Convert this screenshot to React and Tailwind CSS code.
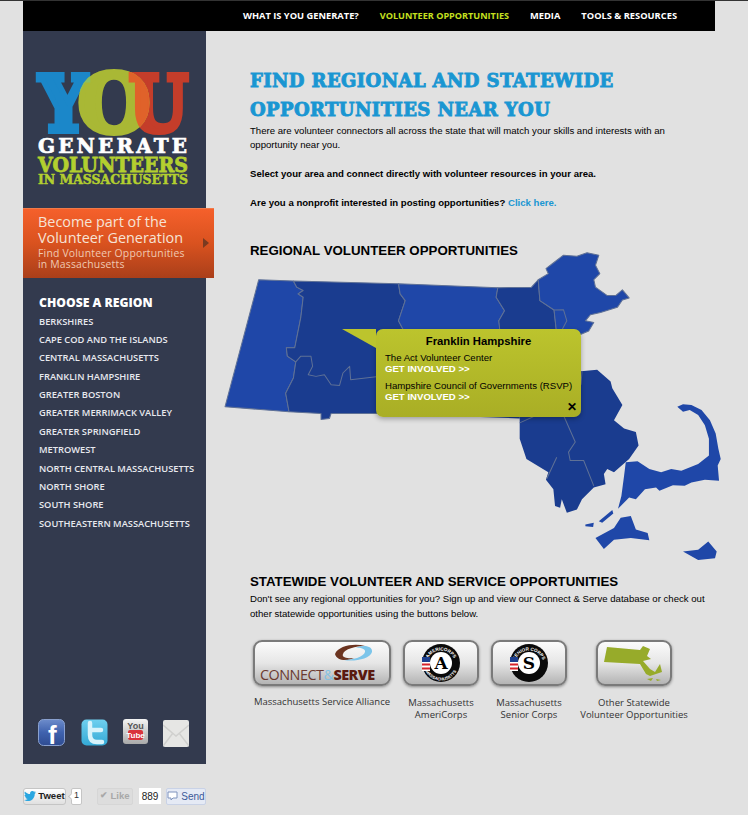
import React from "react";

const regions = [
  "Berkshires",
  "Cape Cod and the Islands",
  "Central Massachusetts",
  "Franklin Hampshire",
  "Greater Boston",
  "Greater Merrimack Valley",
  "Greater Springfield",
  "MetroWest",
  "North Central Massachusetts",
  "North Shore",
  "South Shore",
  "Southeastern Massachusetts",
];

const slab = { fontFamily: "'DejaVu Serif', serif", fontWeight: 700 };

const Logo = () => (
  <svg width="156" height="118" viewBox="0 0 156 118" className="block overflow-visible">
    <defs>
      <mask id="oMask" maskUnits="userSpaceOnUse" x="-5" y="-5" width="170" height="90">
        <text x="44" y="64" fontSize="80" textLength="72" lengthAdjust="spacingAndGlyphs" fill="#fff" stroke="#fff" strokeWidth="6" style={slab}>O</text>
      </mask>
    </defs>
    <text x="5" y="63" fontSize="77" textLength="48" lengthAdjust="spacingAndGlyphs" fill="#1b87c9" stroke="#1b87c9" strokeWidth="6" style={slab}>Y</text>
    <text x="95" y="63" fontSize="77" textLength="59" lengthAdjust="spacingAndGlyphs" fill="#c43d2a" stroke="#c43d2a" strokeWidth="6" style={slab}>U</text>
    <text x="44" y="64" fontSize="80" textLength="72" lengthAdjust="spacingAndGlyphs" fill="#a9b835" stroke="#a9b835" strokeWidth="6" style={slab}>O</text>
    <g mask="url(#oMask)">
      <text x="5" y="63" fontSize="77" textLength="48" lengthAdjust="spacingAndGlyphs" fill="#8cc060" stroke="#8cc060" strokeWidth="6" style={slab}>Y</text>
      <text x="95" y="63" fontSize="77" textLength="59" lengthAdjust="spacingAndGlyphs" fill="#e0622a" stroke="#e0622a" strokeWidth="6" style={slab}>U</text>
    </g>
    <text x="4" y="85" fontSize="20" textLength="149" lengthAdjust="spacing" fill="#fff" stroke="#fff" strokeWidth=".7" style={slab}>GENERATE</text>
    <text x="4" y="104" fontSize="20" textLength="150" lengthAdjust="spacingAndGlyphs" fill="#b3cf2f" stroke="#b3cf2f" strokeWidth=".8" style={slab}>VOLUNTEERS</text>
    <text x="4" y="116" fontSize="13" textLength="150" lengthAdjust="spacingAndGlyphs" fill="#b3cf2f" stroke="#b3cf2f" strokeWidth=".5" style={slab}>IN MASSACHUSETTS</text>
  </svg>
);

const MapShapes = () => (
  <svg width="528" height="330" viewBox="0 0 1568 980" className="block">
    <g stroke="#5f7196" strokeWidth="3" strokeLinejoin="round">
      <path fill="#1f47a8" d="M115,118 L218,122 L228,140 L247,150 L232,160 L247,170 L240,230 L222,320 L197,320 L200,345 L225,362 L218,410 L195,455 L205,510 L15,495 Z" />
      <path fill="#1a3c8f" d="M218,122 L530,130 L535,160 L550,180 L530,240 L545,268 L500,400 L470,515 L330,515 L325,530 L300,533 L300,515 L205,510 L195,455 L218,410 L225,362 L200,345 L197,320 L222,320 L240,230 L247,170 L232,160 L247,150 L228,140 Z" />
      <path fill="#1f47a8" d="M530,130 L825,142 L820,170 L845,210 L828,240 L832,268 L832,400 L500,400 L545,268 L530,240 L550,180 L535,160 Z" />
      <path fill="#1a3c8f" d="M470,515 L890,530 L900,400 L500,400 Z" stroke="none" />
      <path fill="#1a3c8f" d="M825,142 L925,140 L945,118 L950,180 L992,208 L1000,280 L832,280 L828,240 L845,210 L820,170 Z" />
      <path fill="#1f47a8" d="M945,118 L975,100 L968,85 L985,72 L1020,45 L1060,48 L1090,38 L1125,45 L1115,75 L1128,100 L1110,118 L1115,140 L1150,165 L1175,165 L1195,148 L1215,172 L1195,178 L1180,200 L1130,215 L1100,222 L1085,240 L1110,245 L1095,270 L1072,280 L1000,280 L992,208 L950,180 Z" />
      <path fill="none" d="M992,208 L1020,207 L1030,240 L1015,268" />
      <path fill="none" d="M225,362 L240,345 L270,345 L275,375 L262,400 L285,405 L310,400 L330,430 L355,432 L365,395 L385,375 L388,415 L470,405" />
    </g>
    <path fill="#1a3c8f" d="M900,400 L1072,390 L1120,385 L1160,420 L1165,440 L1195,490 L1170,535 L1200,560 L1235,570 L1243,610 L1215,650 L1170,690 L1150,680 L1140,695 L1145,725 L1110,735 L1075,770 L1060,800 L1030,810 L1015,770 L1010,795 L995,790 L990,740 L968,712 L975,690 L910,650 L890,590 L890,530 Z" />
    <path fill="none" stroke="#5f7196" strokeWidth="3" d="M1022,525 L1055,600 L1035,630 L1040,655 L1080,655 L1110,730 M1000,645 L970,710 M890,543 L930,525 M1075,390 L1072,430" />
    <g fill="#1f47a8">
      <path d="M1358,495 L1375,488 L1400,490 L1430,505 L1455,535 L1472,575 L1480,620 L1487,650 L1478,670 L1482,715 L1440,712 L1400,720 L1380,730 L1345,728 L1305,745 L1295,735 L1262,740 L1235,770 L1215,765 L1182,798 L1192,760 L1200,700 L1205,660 L1240,657 L1275,680 L1310,690 L1340,680 L1370,685 L1420,665 L1452,640 L1452,590 L1440,550 L1420,520 L1395,505 L1375,510 Z" />
      <path d="M1115,885 L1170,855 L1190,825 L1220,820 L1235,860 L1270,870 L1275,892 L1220,885 L1170,890 L1140,918 Z" />
      <path d="M1125,835 L1165,802 L1168,812 L1135,840 Z" />
      <path d="M1085,845 L1110,840 L1108,852 L1085,850 Z" />
      <path d="M1375,925 L1420,920 L1450,895 L1475,925 L1470,945 L1420,950 Z" />
    </g>
  </svg>
);

const Tooltip = () => (
  <div className="absolute left-[156px] top-[89px] w-[205px] h-[88px] rounded-[7px] bg-gradient-to-b from-[#bcc42d] to-[#a9ae25] shadow-[0_2px_5px_rgba(0,0,0,0.3)] px-[9px] pt-[5px] text-[9.6px] leading-[11px] text-black">
    <svg width="34" height="19" viewBox="0 0 34 19" className="absolute left-[-34px] top-0">
      <path d="M0,0 L34,0 L34,19 Z" fill="#bcc42d" />
    </svg>
    <div className="text-center text-[11.3px] font-bold leading-[14px] mb-[4px]">Franklin Hampshire</div>
    <div>The Act Volunteer Center</div>
    <div className="font-bold text-white mb-[6px]">GET INVOLVED &gt;&gt;</div>
    <div className="whitespace-nowrap">Hampshire Council of Governments (RSVP)</div>
    <div className="font-bold text-white">GET INVOLVED &gt;&gt;</div>
    <div className="absolute right-[4px] bottom-[3px] text-[12px] font-bold leading-[14px]">✕</div>
  </div>
);

const GlossButton = ({ width, children }) => (
  <div
    className="h-[46px] rounded-[9px] border-2 border-[#7a7a7a] bg-gradient-to-b from-[#fbfbfb] via-[#e6e6e6] to-[#b4b4b4] shadow-[0_1px_3px_rgba(0,0,0,0.4)] flex items-center justify-center overflow-hidden"
    style={{ width }}
  >
    {children}
  </div>
);

const FlagBadge = ({ letter, id, top, bottom }) => (
  <svg width="40" height="40" viewBox="0 0 40 40">
    <defs>
      <path id={id + "t"} d="M5.500,22 A14.500,14.500 0 0 1 34.500,22" />
      <path id={id + "b"} d="M2.500,20 A17.500,17.500 0 0 0 37.500,20" />
    </defs>
    <circle cx="20" cy="20" r="19" fill="#0a0a0a" />
    <circle cx="20" cy="20" r="11" fill="#fff" />
    <text x="20" y="26" textAnchor="middle" fontSize="17" fontWeight="700" fill="#000" fontFamily="'DejaVu Serif', serif">{letter}</text>
    <text fontSize="4.600" fontWeight="700" fill="#fff" fontFamily="'Liberation Sans', sans-serif">
      <textPath href={"#" + id + "t"} startOffset="50%" textAnchor="middle">{top}</textPath>
    </text>
    {bottom && (
      <text fontSize="4.200" fontWeight="700" fill="#fff" fontFamily="'Liberation Sans', sans-serif">
        <textPath href={"#" + id + "b"} startOffset="50%" textAnchor="middle">{bottom}</textPath>
      </text>
    )}
    <rect x="1" y="14" width="8" height="5" fill="#1d3f8f" />
    <rect x="1" y="19" width="8" height="9" fill="#fff" />
    <rect x="1" y="20.500" width="8" height="2" fill="#d8232a" />
    <rect x="1" y="24.500" width="8" height="2" fill="#d8232a" />
  </svg>
);

const ConnectLogo = () => (
  <div className="w-full h-full relative">
    <svg width="40" height="20" viewBox="0 0 40 20" className="absolute left-[79px] top-[1px]">
      <path d="M1,11 C4,3 20,0 31,3 C22,3 10,6 9,11 C7,15 16,16 20,15 C12,19 2,17 1,11 Z" fill="#6b3420" />
      <path d="M38,9 C36,16 20,19 10,17 C18,17 30,14 31,9 C32,6 26,4 21,5 C30,1 39,3 38,9 Z" fill="#7cc5ea" />
    </svg>
    <div className="absolute left-[5px] bottom-[1px] text-[14.4px] leading-[16px] whitespace-nowrap font-['Open_Sans',sans-serif] tracking-[-0.5px] text-[#6b3a30]">
      CONNECT<span className="text-[#85c2e2]">&amp;</span><span className="font-extrabold text-[#5a1a10]">SERVE</span>
    </div>
  </div>
);

const Social = () => (
  <div className="flex items-start pl-[15px] mt-auto mb-[17px]">
    <svg width="27" height="27" viewBox="0 0 27 27" className="mr-[16px]">
      <defs>
        <linearGradient id="fb" x1="0" y1="0" x2="0" y2="1">
          <stop offset="0" stopColor="#6d8ccb" />
          <stop offset=".5" stopColor="#3f62ae" />
          <stop offset="1" stopColor="#2f4c92" />
        </linearGradient>
      </defs>
      <rect x=".5" y=".5" width="26" height="26" rx="5" fill="url(#fb)" stroke="#89a0cf" />
      <text x="10" y="25" fontSize="26" fontWeight="700" fill="#fff" fontFamily="'Liberation Sans', sans-serif">f</text>
    </svg>
    <svg width="27" height="27" viewBox="0 0 27 27" className="mr-[15px]">
      <defs>
        <linearGradient id="tw" x1="0" y1="0" x2="0" y2="1">
          <stop offset="0" stopColor="#6fd0ef" />
          <stop offset="1" stopColor="#34a9d6" />
        </linearGradient>
      </defs>
      <rect x=".5" y=".5" width="26" height="26" rx="5" fill="url(#tw)" />
      <path d="M9,4 L9,16 C9,21 12,23 16,23 L21,23 M9,11 L20,11" fill="none" stroke="#d8f3fb" strokeWidth="4.5" strokeLinecap="round" />
    </svg>
    <svg width="25" height="26" viewBox="0 0 25 26" className="mr-[15px]">
      <defs>
        <linearGradient id="yt" x1="0" y1="0" x2="0" y2="1">
          <stop offset="0" stopColor="#f4f4f4" />
          <stop offset="1" stopColor="#a9a9a9" />
        </linearGradient>
      </defs>
      <rect width="25" height="25" rx="3" fill="url(#yt)" />
      <text x="12.5" y="10" textAnchor="middle" fontSize="9" fontWeight="700" fill="#555" fontFamily="'Liberation Sans', sans-serif">You</text>
      <rect x="5" y="11" width="15" height="10" rx="2" fill="#d9333c" />
      <text x="12.5" y="19" textAnchor="middle" fontSize="8" fontWeight="700" fill="#fff" fontFamily="'Liberation Sans', sans-serif">Tube</text>
    </svg>
    <svg width="26" height="27" viewBox="0 0 26 27" className="mt-[1px]">
      <rect width="26" height="27" rx="2" fill="#e6e6e4" />
      <path d="M0,5 L13,16 L26,5 M0,26 L10,13 M26,26 L16,13" fill="none" stroke="#d0d0ce" strokeWidth="1.5" />
    </svg>
  </div>
);

const Caret = () => (
  <span className="absolute left-[-3px] top-[5px] w-[5px] h-[5px] rotate-45 bg-white border-l border-b border-[#c5c5c5]" />
);

const ShareBar = () => (
  <div className="flex items-center h-[16px] mt-[24px] text-[10px] font-['Liberation_Sans',sans-serif]">
    <div className="w-[43px] h-[17px] flex items-center justify-center gap-[2px] rounded-[3px] border border-[#c5c5c5] bg-gradient-to-b from-[#fff] to-[#e0e0e0] font-bold text-[#222] text-[9.6px]">
      <svg width="12" height="10" viewBox="0 0 24 20">
        <path d="M24,2.4 C23,2.8 22,3.1 21,3.2 C22,2.5 23,1.4 23.400,0.2 C22.400,0.800 21.300,1.200 20.200,1.400 C18,-0.900 14.300,-0.200 12.900,2.100 C12,3.500 11.900,5 12.200,6.200 C8,6 4.300,4 1.700,.9 C.3,3.300 1,6.300 3.300,7.900 C2.500,7.900 1.700,7.600 1,7.300 C1,9.800 2.700,11.800 5,12.300 C4.300,12.500 3.500,12.500 2.800,12.400 C3.400,14.400 5.300,15.900 7.500,15.900 C5.400,17.500 2.700,18.300 0,18 C2.200,19.400 4.900,20.200 7.600,20.200 C16.600,20.200 21.700,12.600 21.400,5.800 C22.400,4.900 23.300,3.800 24,2.400 Z" fill="#2aa6e0" />
      </svg>
      Tweet
    </div>
    <div className="relative ml-[5px] w-[11px] h-[17px] flex items-center justify-center rounded-[2px] border border-[#c5c5c5] bg-white text-[#333] text-[9px]">
      <Caret />
      <span className="relative">1</span>
    </div>
    <div className="ml-[15px] w-[36px] h-[17px] flex items-center justify-center gap-[2px] rounded-[2px] border border-[#d6d6d6] bg-[#dddddd] text-[#a8a8a8] font-bold text-[9.6px]">
      <span className="text-[9px]">✔</span>Like
    </div>
    <div className="relative ml-[6px] w-[22px] h-[16px] flex items-center justify-center bg-white text-[#222]">889</div>
    <div className="ml-[5px] w-[40px] h-[17px] flex items-center justify-center gap-[3px] rounded-[2px] border border-[#c9d2e6] bg-[#e5eaf5] text-[#3b5998]">
      <svg width="11" height="10" viewBox="0 0 11 10">
        <path d="M1,1 H10 V7 H6 L4,9 V7 H1 Z" fill="#fff" stroke="#7f93bd" />
      </svg>
      Send
    </div>
  </div>
);

export default function App() {
  return (
    <div className="w-[748px] h-[815px] overflow-hidden bg-[#e1e1e1] border-t border-[#333] font-['Liberation_Sans',sans-serif]">
      <div className="ml-[23px] w-[692px]">
        <nav className="h-[30px] bg-black flex items-center justify-end pr-[38px] gap-[21px] font-['Open_Sans',sans-serif] font-bold text-[9.3px] text-white whitespace-nowrap">
          <span>WHAT IS YOU GENERATE?</span>
          <span className="text-[#c6e01f] text-[9.1px]">VOLUNTEER OPPORTUNITIES</span>
          <span>MEDIA</span>
          <span>TOOLS &amp; RESOURCES</span>
        </nav>

        <div className="flex">
          <aside className="w-[183px] h-[733px] shrink-0 bg-[#333a4e] flex flex-col">
            <div className="pl-[11px] pt-[37px]">
              <Logo />
            </div>
            <div className="mt-[22px] w-[191px] h-[70px] bg-gradient-to-b from-[#f5602b] via-[#d9521f] to-[#aa3f1a] border-t border-[#f27a48] pl-[15px] pt-[5px] relative font-['Open_Sans',sans-serif] text-[#f6e3d6] whitespace-nowrap">
              <div className="text-[14.4px] leading-[15.5px]">Become part of the</div>
              <div className="text-[14.4px] leading-[15.5px]">Volunteer Generation</div>
              <div className="text-[10.4px] leading-[11px] mt-[3px] tracking-[0.2px] text-[#f0c9b2]">Find Volunteer Opportunities</div>
              <div className="text-[10.4px] leading-[11px] tracking-[0.2px] text-[#f0c9b2]">in Massachusetts</div>
              <div className="absolute left-[180px] top-[29px] w-0 h-0 border-y-[5px] border-y-transparent border-l-[6px] border-l-[#7a3a20]" />
            </div>
            <div className="pl-[16px] mt-[18px] font-['Open_Sans',sans-serif]">
              <div className="text-[12.2px] leading-[14px] font-extrabold text-white mb-[2.500px]">CHOOSE A REGION</div>
              {regions.map((r) => (
                <div key={r} className="h-[18.4px] leading-[18.4px] text-[9.3px] font-semibold uppercase text-[#e8e9ee] whitespace-nowrap">
                  {r}
                </div>
              ))}
            </div>
            <Social />
          </aside>

          <main className="pl-[44px] flex-1 relative text-[9.6px] leading-[14.4px] text-black">
            <h1
              className="mt-[35px] text-[18px] leading-[29px] font-bold text-[#1a96d2] whitespace-nowrap tracking-[0.4px] [-webkit-text-stroke:0.9px_#1a96d2]"
              style={slab}
            >
              FIND REGIONAL AND STATEWIDE
              <br />
              OPPORTUNITIES NEAR YOU
            </h1>
            <p className="w-[440px]">
              There are volunteer connectors all across the state that will match your skills and interests with an opportunity near you.
            </p>
            <p className="font-bold mt-[14.400px]">Select your area and connect directly with volunteer resources in your area.</p>
            <p className="font-bold mt-[14.400px]">
              Are you a nonprofit interested in posting opportunities? <span className="text-[#1a96d2]">Click here.</span>
            </p>

            <h2 className="mt-[33px] text-[13.3px] leading-[16px] font-bold whitespace-nowrap">REGIONAL VOLUNTEER OPPORTUNITIES</h2>
            <div className="relative -ml-[30px] -mt-[19px]">
              <MapShapes />
              <Tooltip />
            </div>

            <h2 className="mt-[4px] text-[13.3px] leading-[16px] font-bold whitespace-nowrap">STATEWIDE VOLUNTEER AND SERVICE OPPORTUNITIES</h2>
            <p className="w-[460px] mt-[2px]">
              Don't see any regional opportunities for you? Sign up and view our Connect &amp; Serve database or check out other statewide opportunities using the buttons below.
            </p>

            <div className="flex mt-[19px] font-['Open_Sans',sans-serif] text-[9.5px] leading-[12px] text-[#333] text-center">
              <div className="ml-[3px] w-[138px]">
                <GlossButton width="138px"><ConnectLogo /></GlossButton>
                <div className="mt-[10px] whitespace-nowrap">Massachusetts Service Alliance</div>
              </div>
              <div className="ml-[12px] w-[76px]">
                <GlossButton width="76px"><FlagBadge id="ac" letter="A" top="AMERICORPS" bottom="MASSACHUSETTS" /></GlossButton>
                <div className="mt-[11px]">Massachusetts<br />AmeriCorps</div>
              </div>
              <div className="ml-[12px] w-[76px]">
                <GlossButton width="76px"><FlagBadge id="sc" letter="S" top="SENIOR CORPS" /></GlossButton>
                <div className="mt-[11px]">Massachusetts<br />Senior Corps</div>
              </div>
              <div className="ml-[29px] w-[76px] relative">
                <GlossButton width="76px">
                  <svg width="60" height="40" viewBox="0 0 60 40" className="-ml-[2px] mt-[4px]">
                    <path d="M4,2 L37,5 L40,1 L47,4 L44,11 L48,14 L40,16 L47,24 L52,27 L57,19 L59,27 L47,31 L43,29 L37,19 L1,17 Z" fill="#97ab2a" />
                    <path d="M44,34 L50,33 L48,36 Z M53,34 L58,35 L54,36 Z" fill="#97ab2a" />
                  </svg>
                </GlossButton>
                <div className="absolute left-1/2 -translate-x-1/2 mt-[11px] whitespace-nowrap">Other Statewide<br />Volunteer Opportunities</div>
              </div>
            </div>
          </main>
        </div>
        <ShareBar />
      </div>
    </div>
  );
}
